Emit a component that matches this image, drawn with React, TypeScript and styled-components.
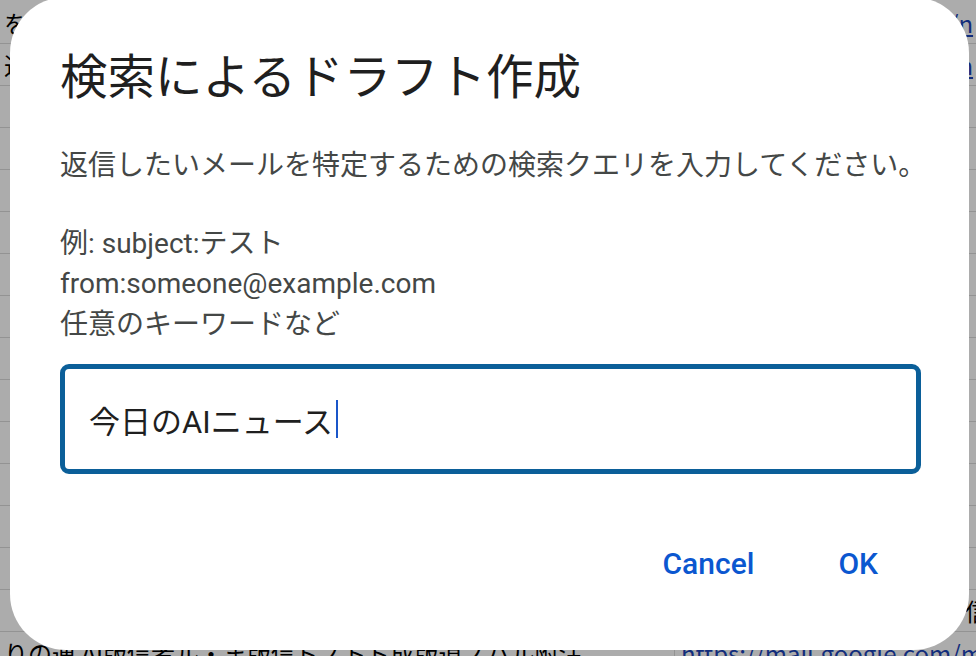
import React from "react";
import styled, { createGlobalStyle } from "styled-components";

const Global = createGlobalStyle`
  html, body { margin: 0; padding: 0; }
  body {
    width: 976px;
    height: 656px;
    overflow: hidden;
    background: #ffffff;
    font-family: Roboto, "Noto Sans CJK JP", sans-serif;
  }
`;

const Page = styled.div`
  width: 976px;
  height: 656px;
  overflow: hidden;
  padding-top: 2px;
  box-sizing: border-box;
  display: flex;
  flex-direction: column;
`;

const Row = styled.div`
  display: grid;
  grid-template-columns: 675px 1fr;
  height: 42px;
  flex: none;
  border-bottom: 1px solid #dadada;
  box-sizing: border-box;
  font-size: 24px;
  color: #000;
  font-family: "Noto Sans CJK JP", sans-serif;
`;

const Cell = styled.div<{ $right?: boolean }>`
  overflow: hidden;
  white-space: nowrap;
  display: flex;
  align-items: center;
  padding-left: ${(p) => (p.$right ? "6px" : "4px")};
  border-right: ${(p) => (p.$right ? "none" : "1px solid #dadada")};
`;

const Link = styled.span<{ $shift?: number }>`
  color: #1a44b8;
  text-decoration: underline;
  margin-left: ${(p) => p.$shift ?? 0}px;
`;

const Overlay = styled.div`
  position: fixed;
  inset: 0;
  background: rgba(0, 0, 0, 0.325);
  display: flex;
  align-items: flex-start;
  padding-left: 10px;
`;

const Dialog = styled.div`
  width: 959px;
  height: 653px;
  margin-top: -3px;
  background: #ffffff;
  border-radius: 56px;
  box-sizing: border-box;
  padding: 53px 48px 0 50px;
  display: flex;
  flex-direction: column;
`;

const Title = styled.h1`
  margin: 0;
  font-size: 47.5px;
  line-height: 56px;
  font-weight: 400;
  color: #1f1f1f;
  font-family: Roboto, "Noto Sans CJK JP", sans-serif;
`;

const Text = styled.p<{ $mt: number }>`
  margin: ${(p) => p.$mt}px 0 0 0;
  font-size: 28px;
  line-height: 40.5px;
  color: #444746;
  white-space: nowrap;
`;

const Field = styled.div`
  margin-top: 19px;
  height: 110px;
  border: 5px solid #0b5f99;
  border-radius: 9px;
  box-sizing: border-box;
  display: flex;
  align-items: center;
  padding-left: 24px;
  font-size: 31px;
  color: #1f1f1f;
`;

const Caret = styled.span`
  display: inline-block;
  width: 2px;
  height: 38px;
  background: #1a56c9;
  margin-left: 3px;
`;

const Actions = styled.div`
  margin-top: 72px;
  display: flex;
  justify-content: flex-end;
  gap: 84px;
  padding-right: 43px;
`;

const ActionButton = styled.button`
  border: none;
  background: none;
  padding: 0;
  font-family: Roboto, "Noto Sans CJK JP", sans-serif;
  font-size: 30px;
  font-weight: 500;
  color: #0b57d0;
  cursor: pointer;
  line-height: 36px;
`;

const leftTexts: Record<number, string> = {
  0: "を",
  1: "送",
};

export default function App() {
  const rows = Array.from({ length: 16 }, (_, i) => i);
  return (
    <>
      <Global />
      <Page>
        {rows.map((i) => (
          <Row key={i}>
            <Cell>
              {i === 15
                ? "りの連 AI版信者ル・ま版信ドノトド成版道ノバル附注"
                : leftTexts[i] ?? ""}
            </Cell>
            <Cell $right>
              {i <= 1 ? (
                <Link $shift={268}>/n</Link>
              ) : i === 14 ? (
                <span style={{ marginLeft: 284 }}>信</span>
              ) : i === 15 ? (
                <Link>https://mail.google.com/m</Link>
              ) : null}
            </Cell>
          </Row>
        ))}
      </Page>
      <Overlay>
        <Dialog role="dialog">
          <Title>検索によるドラフト作成</Title>
          <Text $mt={40}>返信したいメールを特定するための検索クエリを入力してください。</Text>
          <Text $mt={37}>
            例: subject:テスト
            <br />
            from:someone@example.com
            <br />
            任意のキーワードなど
          </Text>
          <Field>
            今日のAIニュース
            <Caret />
          </Field>
          <Actions>
            <ActionButton>Cancel</ActionButton>
            <ActionButton>OK</ActionButton>
          </Actions>
        </Dialog>
      </Overlay>
    </>
  );
}
